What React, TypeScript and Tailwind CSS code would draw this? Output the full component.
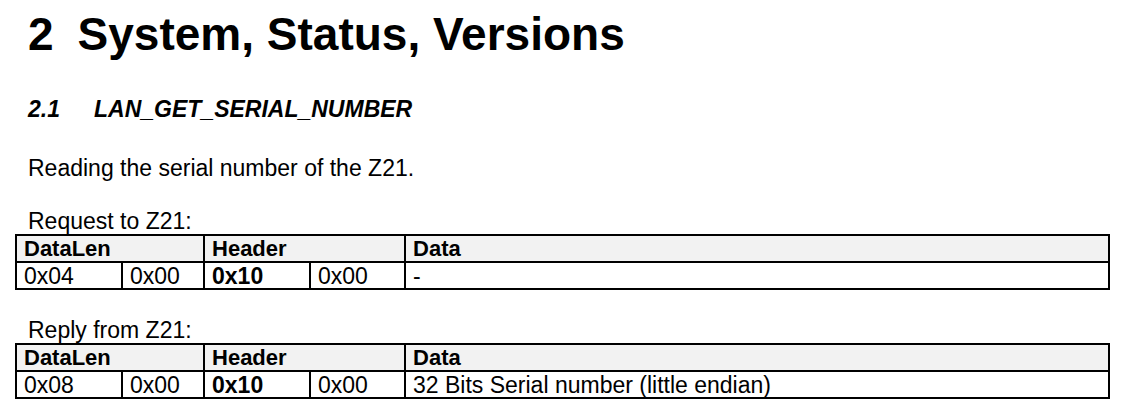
import React from "react";

function PacketTable({ len, data }: { len: string; data: string }) {
  const cell = "border-2 border-black pl-[7px] text-left align-middle leading-[24px] p-0";
  return (
    <table className="table-fixed border-collapse w-[1095px] text-black">
      <colgroup>
        <col className="w-[106px]" />
        <col className="w-[82px]" />
        <col className="w-[106px]" />
        <col className="w-[95px]" />
        <col />
      </colgroup>
      <thead>
        <tr className="h-[27px] bg-[#f2f2f2] font-bold text-[22px]">
          <th colSpan={2} className={cell}>DataLen</th>
          <th colSpan={2} className={cell}>Header</th>
          <th className={cell}>Data</th>
        </tr>
      </thead>
      <tbody>
        <tr className="h-[27px] text-[23px]">
          <td className={cell}>{len}</td>
          <td className={cell}>0x00</td>
          <td className={`${cell} font-bold`}>0x10</td>
          <td className={cell}>0x00</td>
          <td className={cell}>{data}</td>
        </tr>
      </tbody>
    </table>
  );
}

export default function App() {
  return (
    <div
      className="w-[1129px] h-[420px] overflow-hidden bg-white text-black pl-[15px]"
      style={{ fontFamily: '"Liberation Sans", Arial, sans-serif' }}
    >
      {/* Kapitel-Überschrift */}
      <h1 className="pl-[13px] pt-[9px] flex gap-[24px] text-[46px] leading-[50px] font-bold">
        <span>2</span>
        <span>System, Status, Versions</span>
      </h1>

      <h2 className="pl-[13px] mt-[36px] flex text-[23px] leading-[28px] font-bold italic">
        <span className="w-[66px]">2.1</span>
        <span>LAN_GET_SERIAL_NUMBER</span>
      </h2>

      <p className="pl-[13px] mt-[31px] text-[23px] leading-[28px]">
        Reading the serial number of the Z21.
      </p>

      <p className="pl-[13px] mt-[26px] text-[23px] leading-[26px]">Request to Z21:</p>
      <PacketTable len="0x04" data="-" />

      <p className="pl-[13px] mt-[27px] text-[23px] leading-[26px]">Reply from Z21:</p>
      <PacketTable len="0x08" data="32 Bits Serial number (little endian)" />
    </div>
  );
}
